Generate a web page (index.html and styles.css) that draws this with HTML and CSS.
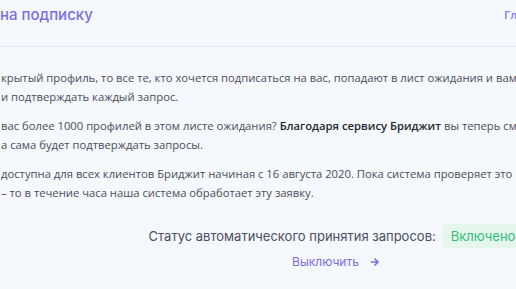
FILE: index.html
```html
<html>
<head>
    <link rel="stylesheet" href="styles.css">
</head>
<body>
    <div class="page">
        <div class="head">
            <h1 class="title">на подписку</h1>
            <a class="crumb">Главная</a>
        </div>
        <div class="content">
            <p class="txt">крытый профиль, то все те, кто хочется подписаться на вас, попадают в лист ожидания и вам<br>и подтверждать каждый запрос.</p>
            <p class="txt">вас более 1000 профилей в этом листе ожидания? <b>Благодаря сервису Бриджит</b> вы теперь сможете<br>а сама будет подтверждать запросы.</p>
            <p class="txt">доступна для всех клиентов Бриджит начиная с 16 августа 2020. Пока система проверяет это<br>– то в течение часа наша система обработает эту заявку.</p>
            <div class="status">
                <div class="status-row">
                    <span class="status-label">Статус автоматического принятия запросов:</span>
                    <span class="badge">Включено</span>
                </div>
                <a class="off">Выключить
                    <svg width="10" height="10" viewBox="0 0 10 10"><path d="M1.5 5h6M5 2 8 5 5 8" fill="none" stroke="#7b6ee6" stroke-width="1.7" stroke-linecap="round" stroke-linejoin="round"/></svg>
                </a>
            </div>
        </div>
    </div>
</body>
</html>
```

FILE: styles.css
```css
body {
    margin: 0;
    padding: 0;
    background: #f5f8fc;
    overflow: hidden;
    font-family: "Open Sans", sans-serif;
}
.page {
    width: 516px;
}
.head {
    height: 46px;
    border-bottom: 1px solid #e4e8ef;
    display: flex;
    justify-content: space-between;
    align-items: flex-start;
    white-space: nowrap;
    overflow: hidden;
}
.title {
    margin: 0;
    padding-top: 5px;
    font-family: Inter, sans-serif;
    font-size: 15px;
    font-weight: 500;
    color: #7a6ee4;
    line-height: 20px;
}
.crumb {
    font-family: Inter, sans-serif;
    font-size: 11px;
    font-weight: 600;
    color: #8d83ee;
    padding-top: 8px;
    margin-right: -33px;
}
.content {
    padding-top: 21px;
    white-space: nowrap;
    overflow: hidden;
}
.txt {
    margin: 0 0 10px 1px;
    font-size: 11.25px;
    line-height: 19px;
    color: #4a4d59;
}
.txt b {
    font-weight: 600;
    color: #25272f;
}
.status {
    width: 680px;
    margin-left: -4px;
    padding-top: 12px;
    display: flex;
    flex-direction: column;
    align-items: center;
    gap: 6px;
}
.status-row {
    display: flex;
    align-items: center;
    gap: 7px;
}
.status-label {
    font-family: Inter, sans-serif;
    font-size: 13px;
    color: #4a4e62;
}
.badge {
    font-family: Inter, sans-serif;
    font-size: 13px;
    line-height: 16px;
    color: #2fbf78;
    background: #e5f7ec;
    border-radius: 4px;
    padding: 4px 8px;
}
.off {
    font-family: Inter, sans-serif;
    font-size: 12px;
    line-height: 16px;
    color: #7b6ee6;
    display: flex;
    align-items: center;
    gap: 11px;
}
```
